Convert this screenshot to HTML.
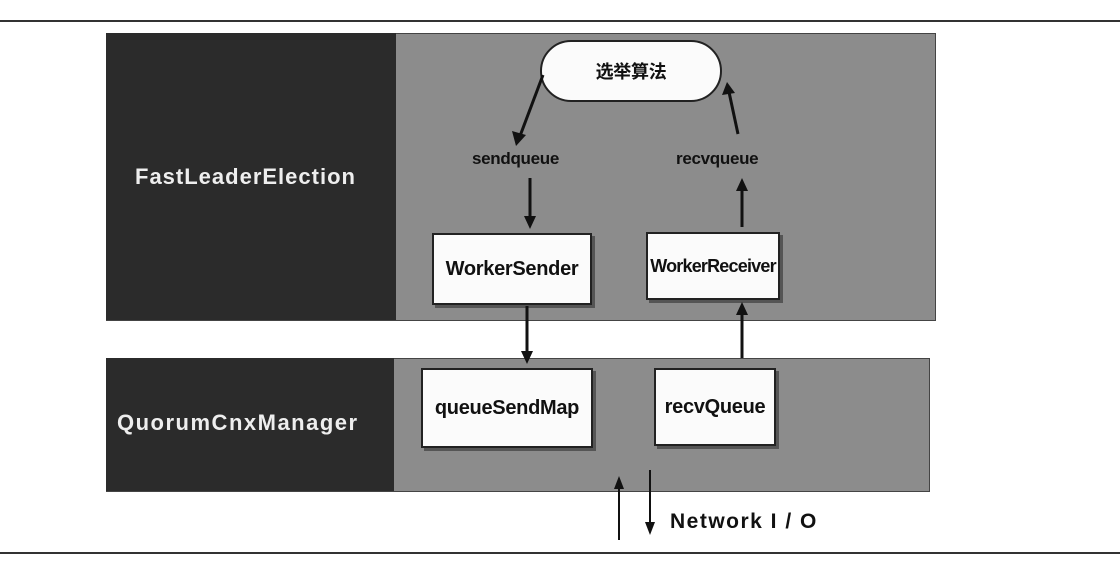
<!DOCTYPE html>
<html><head><meta charset="utf-8"><style>
body{margin:0;width:1120px;height:566px;background:#fff;position:relative;overflow:hidden;font-family:"Liberation Sans","Noto Sans CJK SC",sans-serif}
.a{position:absolute}
.box{position:absolute;background:#fbfbfb;border:2px solid #222;box-shadow:3px 3px 0 #555;display:flex;align-items:center;justify-content:center;font-weight:bold;font-size:20px;color:#111;box-sizing:border-box;letter-spacing:-0.3px;white-space:nowrap}
.lbl{position:absolute;color:#eee;font-size:22px;font-weight:bold}
.t{position:absolute;font-weight:bold;font-size:17px;color:#111;letter-spacing:-0.3px}
</style></head><body>
<div class="a" style="left:0;top:20px;width:1120px;height:2px;background:#333"></div>
<div class="a" style="left:0;top:552px;width:1120px;height:2px;background:#333"></div>

<div class="a" style="left:106px;top:33px;width:828px;height:286px;background:#8c8c8c;border:1px solid #444"></div>
<div class="a" style="left:106px;top:33px;width:290px;height:287px;background:#2b2b2b"></div>
<div class="lbl" style="left:135px;top:164px;letter-spacing:1px">FastLeaderElection</div>

<div class="a" style="left:106px;top:358px;width:822px;height:132px;background:#8c8c8c;border:1px solid #444"></div>
<div class="a" style="left:106px;top:358px;width:288px;height:133px;background:#2b2b2b"></div>
<div class="lbl" style="left:117px;top:410px;letter-spacing:1.5px">QuorumCnxManager</div>

<div class="box" style="left:540px;top:40px;width:182px;height:62px;border-radius:31px;box-shadow:none;font-size:18px">选举算法</div>
<div class="t" style="left:472px;top:149px">sendqueue</div>
<div class="t" style="left:676px;top:149px">recvqueue</div>

<div class="box" style="left:432px;top:233px;width:160px;height:72px">WorkerSender</div>
<div class="box" style="left:646px;top:232px;width:134px;height:68px;font-size:18px;letter-spacing:-0.8px">WorkerReceiver</div>
<div class="box" style="left:421px;top:368px;width:172px;height:80px">queueSendMap</div>
<div class="box" style="left:654px;top:368px;width:122px;height:78px">recvQueue</div>
<div class="t" style="left:670px;top:510px;font-size:21px;letter-spacing:1.5px">Network I / O</div>

<svg class="a" style="left:0;top:0" width="1120" height="566">
<g stroke="#111" stroke-width="3" fill="none">
<path d="M543 75L520 136"/>
<path d="M738 134L729 92"/>
<path d="M530 178L530 220"/>
<path d="M742 227L742 188"/>
<path d="M527 306L527 354"/>
<path d="M742 358L742 312"/>
</g>
<g stroke="#111" stroke-width="2" fill="none">
<path d="M619 540L619 486"/>
<path d="M650 470L650 524"/>
</g>
<g fill="#111">
<polygon points="516,146 512,131 526,135"/>
<polygon points="727,82 722,95 735,93"/>
<polygon points="530,229 524,216 536,216"/>
<polygon points="742,178 736,191 748,191"/>
<polygon points="527,364 521,351 533,351"/>
<polygon points="742,302 736,315 748,315"/>
<polygon points="619,476 614,489 624,489"/>
<polygon points="650,535 645,522 655,522"/>
</g>
</svg>
</body></html>
